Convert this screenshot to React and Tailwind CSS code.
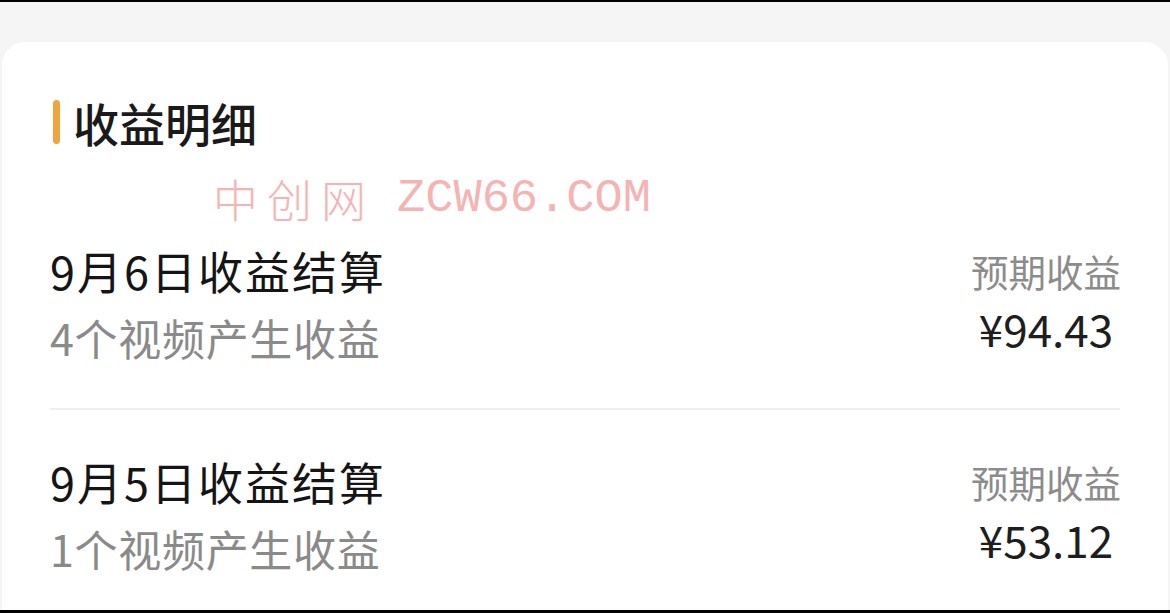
import React from "react";

const rows = [
  { date: "9月6日收益结算", videos: "4个视频产生收益", amount: "¥94.43" },
  { date: "9月5日收益结算", videos: "1个视频产生收益", amount: "¥53.12" },
];

export default function App() {
  return (
    <div
      className="w-[1170px] h-[613px] overflow-hidden bg-[#f5f5f5] border-t-2 border-b-[3px] border-black flex flex-col"
      style={{ fontFamily: '"Noto Sans CJK SC", "Noto Sans", sans-serif' }}
    >
      <div className="h-[40px] shrink-0" />
      {/* card */}
      <div className="relative flex-1 mx-[2px] bg-white rounded-t-[24px] px-[48px] pt-[57px]">
        {/* header */}
        <div className="flex items-center h-[46px]">
          <span className="ml-[3px] w-[7px] h-[44px] rounded-full bg-[#f0a43e]" />
          <h2 className="ml-[13px] text-[46px] leading-none font-medium text-[#1a1a1a]">收益明细</h2>
        </div>

        {/* watermark */}
        <div className="absolute left-[211px] top-[133px] flex items-center text-[#f6b3b3] leading-none pointer-events-none">
          <span style={{ fontFamily: '"Noto Sans CJK SC", serif' }} className="text-[45px] font-light tracking-[9px]">中创网</span>
          <span style={{ fontFamily: '"Liberation Mono", monospace' }} className="ml-[22px] text-[47px]">ZCW66.COM</span>
        </div>

        {/* list */}
        <div className="mt-[54px]">
          {rows.map((r, i) => (
            <div
              key={i}
              className={`flex items-start justify-between py-[49px] ${i > 0 ? "border-t-2 border-[#efefef]" : ""}`}
            >
              <div className="flex flex-col">
                <span className="text-[45px] leading-none tracking-[2px] text-[#151515]">{r.date}</span>
                <span className="mt-[23px] text-[43px] leading-none tracking-[0.7px] text-[#8a8a8a]">{r.videos}</span>
              </div>
              <div className="flex flex-col items-center mr-[-1px]">
                <span className="mt-[4px] text-[37.5px] leading-none text-[#8c8c8c]">预期收益</span>
                <span className="mt-[16px] text-[44px] leading-none text-[#1e1e1e]">{r.amount}</span>
              </div>
            </div>
          ))}
        </div>
      </div>
    </div>
  );
}
